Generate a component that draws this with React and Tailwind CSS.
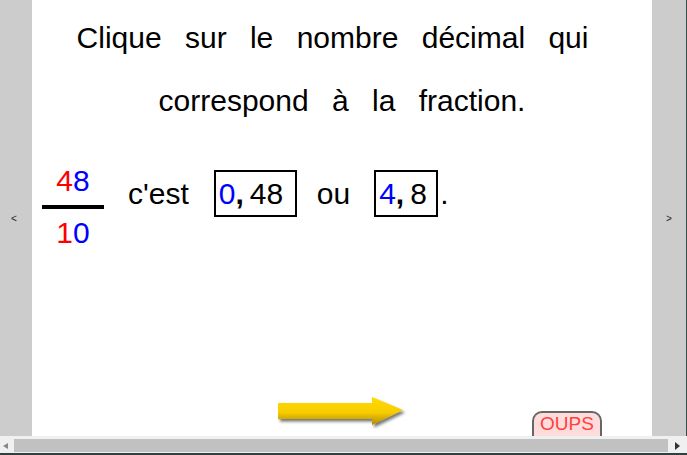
// exercise slide: fraction 48/10 -> choose the matching decimal
import React from 'react';

const Arrow = () => (
  <svg width="132" height="34" viewBox="0 0 132 34">
    <defs>
      <linearGradient id="gold" x1="0" y1="0" x2="0" y2="1">
        <stop offset="0%" stopColor="#ffdc00" />
        <stop offset="55%" stopColor="#f7cc00" />
        <stop offset="100%" stopColor="#b08a00" />
      </linearGradient>
      <filter id="shade" x="-10%" y="-20%" width="130%" height="160%">
        <feDropShadow dx="2" dy="2.5" stdDeviation="1.6" floodColor="#000" floodOpacity="0.55" />
      </filter>
    </defs>
    <path d="M0 6 L94 6 L94 0 L125 13 L94 28 L94 22 L0 22 Z" fill="url(#gold)" filter="url(#shade)" />
  </svg>
);

const Box = ({ first, rest, width }) => (
  <div
    className="mt-[4px] border-2 border-black leading-[43px] pl-[3px] whitespace-nowrap"
    style={{ width }}
  >
    <span className="text-[#0000ff]">{first}</span>
    <span className="font-bold mr-[6px]">,</span>
    <span>{rest}</span>
  </div>
);

const App = () => {
  return (
    <div className="w-[687px] h-[455px] flex flex-col bg-white overflow-hidden font-['Liberation_Sans',Arial,sans-serif]">
      <div className="h-[436px] flex">
        <div className="w-[32px] bg-[#cccccc] flex items-center justify-center pr-[4px] text-[10px] text-[#222]">
          &lt;
        </div>

        <div className="w-[620px] bg-white flex flex-col text-black">
          <div className="pt-[6px] text-[30px] leading-[63px] text-center [word-spacing:15px]">
            <div className="pr-[19px]">Clique sur le nombre décimal qui</div>
            <div>correspond à la fraction.</div>
          </div>

          <div className="mt-[34px] flex items-start text-[30px]">
            <div className="ml-[10px] w-[62px] flex flex-col items-center">
              <div className="leading-[30px]">
                <span className="text-[#ff0000]">4</span>
                <span className="text-[#0000ff]">8</span>
              </div>
              <div className="mt-[9px] h-[4px] w-full bg-black" />
              <div className="mt-[9px] leading-[30px]">
                <span className="text-[#ff0000]">1</span>
                <span className="text-[#0000ff]">0</span>
              </div>
            </div>
            <div className="ml-[24px] mt-[4px] leading-[47px]">c'est</div>
            <div className="ml-[25px]">
              <Box first="0" rest="48" width={83} />
            </div>
            <div className="ml-[20px] mt-[4px] leading-[47px]">ou</div>
            <div className="ml-[24px]">
              <Box first="4" rest="8" width={64} />
            </div>
            <div className="ml-[2px] mt-[4px] leading-[47px]">.</div>
          </div>

          <div className="flex-1" />

          <div className="h-[39px] flex items-end">
            <div className="ml-[246px] self-start">
              <Arrow />
            </div>
            <div className="ml-[122px] w-[70px] h-[25px] border-2 border-b-0 border-[#666] rounded-t-[10px] bg-[#ffdcdc] text-[#ff4040] text-[19px] leading-[22px] text-center">
              OUPS
            </div>
          </div>
        </div>

        <div className="w-[34px] bg-[#cccccc] flex items-center justify-center text-[10px] text-[#222]">
          &gt;
        </div>
        <div className="w-[1px] bg-[#3c4b4b]" />
      </div>

      <div className="h-[19px] flex flex-col bg-[#f0f0f0]">
        <div className="h-[3px]" />
        <div className="h-[13px] flex items-center">
          <div className="w-[14px] flex items-center justify-center pr-[3px]">
            <div className="w-0 h-0 border-y-[3px] border-y-transparent border-r-[5px] border-r-[#888]" />
          </div>
          <div className="flex-1 h-full bg-[#c1c1c1]" />
          <div className="w-[19px] flex items-center justify-center">
            <div className="w-0 h-0 border-y-[4px] border-y-transparent border-l-[5px] border-l-[#333]" />
          </div>
        </div>
        <div className="h-[1px]" />
        <div className="h-[2px] bg-[#2e4040]" />
      </div>
    </div>
  );
};

export default App;
